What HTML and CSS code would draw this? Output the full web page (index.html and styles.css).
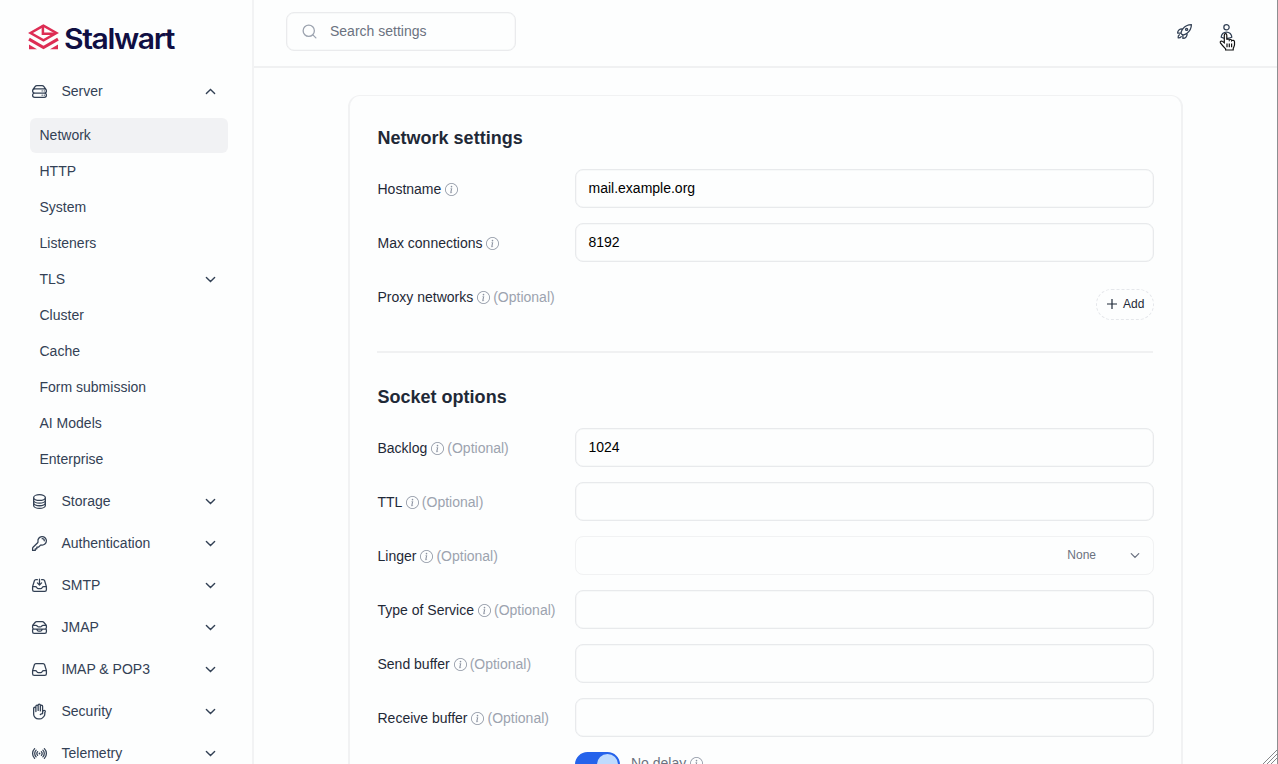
FILE: index.html
```html
<!DOCTYPE html>
<html lang="en">
<head>
<meta charset="utf-8">
<title>Stalwart - Network settings</title>
<link rel="stylesheet" href="styles.css">
</head>
<body>
<svg class="sprite" aria-hidden="true">
  <symbol id="down" viewBox="0 0 16 16"><path d="M2 5l6 6 6-6"/></symbol>
  <symbol id="info" viewBox="0 0 16 16"><path d="M8 15A7 7 0 1 1 8 1a7 7 0 0 1 0 14zm0 1A8 8 0 1 0 8 0a8 8 0 0 0 0 16z"/><path d="m8.93 6.588-2.29.287-.082.38.45.083c.294.07.352.176.288.469l-.738 3.468c-.194.897.105 1.319.808 1.319.545 0 1.178-.252 1.465-.598l.088-.416c-.2.176-.492.246-.686.246-.275 0-.375-.193-.304-.533L8.93 6.588zM9 4.5a1 1 0 1 1-2 0 1 1 0 0 1 2 0z"/></symbol>
</svg>
<div class="app">
  <aside class="sidebar">
    <svg class="logo" width="150" height="34" viewBox="0 0 150 34">
      <g fill="none" stroke="#dd2d54" stroke-width="2.5">
        <path d="M14.500 4.700 1.600 12l12.900 7.300L27.400 12z"/>
        <path d="M13.900 4.500v8.200h12"/>
        <path d="M0 18.100l14.500 8.400L29 18.100" stroke-width="3.100"/>
      </g>
      <path d="M0 23.400v4.800h8zM29 23.400v4.800h-8z" fill="#dd2d54"/>
      <text x="35" y="28" textLength="110" lengthAdjust="spacingAndGlyphs" class="wordmark">Stalwart</text>
    </svg>
    <nav class="nav">
      <a class="group first"><svg class="ico" viewBox="0 0 24 24"><path d="M5.250 14.250h13.500m-13.500 0a3 3 0 0 1-3-3m3 3a3 3 0 1 0 0 6h13.500a3 3 0 1 0 0-6m-16.500-3a3 3 0 0 1 3-3h13.500a3 3 0 0 1 3 3m-19.500 0a4.500 4.500 0 0 1 .9-2.700L5.737 5.100a3.375 3.375 0 0 1 2.700-1.350h7.126c1.062 0 2.062.5 2.700 1.350l2.587 3.450a4.500 4.500 0 0 1 .9 2.700m0 0a3 3 0 0 1-3 3m0 3h.008v.008h-.008v-.008Zm0-6h.008v.008h-.008v-.008Zm-3 6h.008v.008h-.008v-.008Zm0-6h.008v.008h-.008v-.008Z"/></svg>Server<svg class="chev up"><use href="#down"/></svg></a>
      <div class="sub">
        <a class="active">Network</a><a>HTTP</a><a>System</a><a>Listeners</a>
        <a>TLS<svg class="chev"><use href="#down"/></svg></a>
        <a>Cluster</a><a>Cache</a><a>Form submission</a><a>AI Models</a><a>Enterprise</a>
      </div>
      <a class="group"><svg class="ico" viewBox="0 0 24 24"><path d="M20.250 6.375c0 2.278-3.694 4.125-8.250 4.125S3.750 8.653 3.750 6.375m16.500 0c0-2.278-3.694-4.125-8.250-4.125S3.750 4.097 3.750 6.375m16.500 0v11.250c0 2.278-3.694 4.125-8.250 4.125s-8.250-1.847-8.250-4.125V6.375m16.500 0v3.750m-16.500-3.750v3.750m16.500 0v3.750C20.250 16.153 16.556 18 12 18s-8.250-1.847-8.250-4.125v-3.750m16.500 0c0 2.278-3.694 4.125-8.250 4.125s-8.250-1.847-8.250-4.125"/></svg>Storage<svg class="chev"><use href="#down"/></svg></a>
      <a class="group"><svg class="ico" viewBox="0 0 24 24"><path d="M15.750 5.250a3 3 0 0 1 3 3m3 0a6 6 0 0 1-7.029 5.912c-.563-.097-1.159.026-1.563.43L10.500 17.250H8.250v2.250H6v2.250H2.250v-2.818c0-.597.237-1.170.659-1.591l6.499-6.499c.404-.404.527-1 .43-1.563A6 6 0 1 1 21.750 8.250Z"/></svg>Authentication<svg class="chev"><use href="#down"/></svg></a>
      <a class="group"><svg class="ico" viewBox="0 0 24 24"><path d="M9 3.750H6.912a2.250 2.250 0 0 0-2.150 1.588L2.350 13.177a2.250 2.250 0 0 0-.1.661V18a2.250 2.250 0 0 0 2.250 2.250h15A2.250 2.250 0 0 0 21.750 18v-4.162c0-.224-.034-.447-.1-.661L19.240 5.338a2.250 2.250 0 0 0-2.150-1.588H15M2.250 13.500h3.860a2.250 2.250 0 0 1 2.012 1.244l.256.512a2.250 2.250 0 0 0 2.013 1.244h3.218a2.250 2.250 0 0 0 2.013-1.244l.256-.512a2.250 2.250 0 0 1 2.013-1.244h3.859M12 3v8.250m0 0-3-3m3 3 3-3"/></svg>SMTP<svg class="chev"><use href="#down"/></svg></a>
      <a class="group"><svg class="ico" viewBox="0 0 24 24"><path d="m7.875 14.250 1.214 1.942a2.250 2.250 0 0 0 1.908 1.058h2.006c.776 0 1.497-.4 1.908-1.058l1.214-1.942M2.410 9h4.636a2.250 2.250 0 0 1 1.872 1.002l.164.246a2.250 2.250 0 0 0 1.872 1.002h2.092a2.250 2.250 0 0 0 1.872-1.002l.164-.246A2.250 2.250 0 0 1 16.954 9h4.636M2.410 9a2.250 2.250 0 0 0-.16.832V12a2.250 2.250 0 0 0 2.250 2.250h15A2.250 2.250 0 0 0 21.750 12V9.832c0-.287-.055-.57-.16-.832M2.410 9a2.250 2.250 0 0 1 .382-.632l3.285-3.832a2.250 2.250 0 0 1 1.708-.786h8.430c.657 0 1.281.287 1.709.786l3.284 3.832c.163.190.291.404.382.632M4.500 20.250h15A2.250 2.250 0 0 0 21.750 18v-2.625c0-.621-.504-1.125-1.125-1.125H3.375c-.621 0-1.125.504-1.125 1.125V18a2.250 2.250 0 0 0 2.250 2.250Z"/></svg>JMAP<svg class="chev"><use href="#down"/></svg></a>
      <a class="group"><svg class="ico" viewBox="0 0 24 24"><path d="M2.250 13.500h3.860a2.250 2.250 0 0 1 2.012 1.244l.256.512a2.250 2.250 0 0 0 2.013 1.244h3.218a2.250 2.250 0 0 0 2.013-1.244l.256-.512a2.250 2.250 0 0 1 2.013-1.244h3.859m-19.500.338V18a2.250 2.250 0 0 0 2.250 2.250h15A2.250 2.250 0 0 0 21.750 18v-4.162c0-.224-.034-.447-.1-.661L19.240 5.338a2.250 2.250 0 0 0-2.150-1.588H6.911a2.250 2.250 0 0 0-2.150 1.588L2.350 13.177a2.250 2.250 0 0 0-.1.661Z"/></svg>IMAP &amp; POP3<svg class="chev"><use href="#down"/></svg></a>
      <a class="group"><svg class="ico" viewBox="0 0 24 24"><path d="M10.050 4.575a1.575 1.575 0 1 0-3.150 0v3m3.150-3v-1.500a1.575 1.575 0 0 1 3.150 0v1.500m-3.150 0 .075 5.925m3.075.75V4.575m0 0a1.575 1.575 0 0 1 3.150 0V15M6.900 7.575a1.575 1.575 0 1 0-3.150 0v8.175a6.750 6.750 0 0 0 6.750 6.750h2.018a5.250 5.250 0 0 0 3.712-1.538l1.732-1.732a5.250 5.250 0 0 0 1.538-3.712l.003-2.024a.668.668 0 0 1 .198-.471 1.575 1.575 0 1 0-2.228-2.228 3.818 3.818 0 0 0-1.120 2.687M6.900 7.575V12m6.270 4.318A4.490 4.490 0 0 1 16.350 15m.002 0h-.002"/></svg>Security<svg class="chev"><use href="#down"/></svg></a>
      <a class="group"><svg class="ico" viewBox="0 0 24 24"><path d="M9.348 14.652a3.750 3.750 0 0 1 0-5.304m5.304 0a3.750 3.750 0 0 1 0 5.304m-7.425 2.121a6.750 6.750 0 0 1 0-9.546m9.546 0a6.750 6.750 0 0 1 0 9.546M5.106 18.894c-3.808-3.807-3.808-9.980 0-13.788m13.788 0c3.808 3.807 3.808 9.980 0 13.788M12 12h.008v.008H12V12Zm.375 0a.375.375 0 1 1-.75 0 .375.375 0 0 1 .75 0Z"/></svg>Telemetry<svg class="chev"><use href="#down"/></svg></a>
    </nav>
  </aside>
  <div class="page">
    <header class="topbar">
      <div class="search">
        <svg width="15" height="15" viewBox="0 0 16 16"><circle cx="7.200" cy="7.200" r="6"/><path d="M11.600 11.600l3.200 3.200"/></svg>
        <span>Search settings</span>
      </div>
      <div class="actions">
        <svg class="action" viewBox="0 0 24 24"><path d="M15.590 14.370a6 6 0 0 1-5.840 7.380v-4.800m5.840-2.580a14.980 14.980 0 0 0 6.160-12.120A14.980 14.980 0 0 0 9.631 8.410m5.960 5.960a14.926 14.926 0 0 1-5.841 2.580m-.119-8.540a6 6 0 0 0-7.381 5.840h4.800m2.581-5.840a14.927 14.927 0 0 0-2.580 5.840m2.699 2.700c-.103.021-.207.041-.311.06a15.090 15.090 0 0 1-2.448-2.448 14.900 14.900 0 0 1 .06-.312m-2.240 2.390a4.493 4.493 0 0 0-1.757 4.306 4.493 4.493 0 0 0 4.306-1.758M16.500 9a1.500 1.500 0 1 1-3 0 1.500 1.500 0 0 1 3 0Z"/></svg>
        <svg class="action" viewBox="0 0 24 24"><path d="M15.750 6a3.750 3.750 0 1 1-7.500 0 3.750 3.750 0 0 1 7.500 0ZM4.501 20.118a7.500 7.500 0 0 1 14.998 0A17.933 17.933 0 0 1 12 21.750c-2.676 0-5.216-.584-7.499-1.632Z"/></svg>
      </div>
    </header>
    <main class="card">
      <section class="section">
        <h2>Network settings</h2>
        <div class="row"><label>Hostname <svg class="info"><use href="#info"/></svg></label><div class="field">mail.example.org</div></div>
        <div class="row"><label>Max connections <svg class="info"><use href="#info"/></svg></label><div class="field">8192</div></div>
        <div class="row"><label>Proxy networks <svg class="info"><use href="#info"/></svg> <i>(Optional)</i></label><div class="add"><svg width="10" height="10" viewBox="0 0 10 10"><path d="M5 0v10M0 5h10"/></svg>Add</div></div>
      </section>
      <section class="section">
        <h2>Socket options</h2>
        <div class="row"><label>Backlog <svg class="info"><use href="#info"/></svg> <i>(Optional)</i></label><div class="field">1024</div></div>
        <div class="row"><label>TTL <svg class="info"><use href="#info"/></svg> <i>(Optional)</i></label><div class="field"></div></div>
        <div class="row"><label>Linger <svg class="info"><use href="#info"/></svg> <i>(Optional)</i></label><div class="field unit"><span>None</span><svg class="chev"><use href="#down"/></svg></div></div>
        <div class="row"><label>Type of Service <svg class="info"><use href="#info"/></svg> <i>(Optional)</i></label><div class="field"></div></div>
        <div class="row"><label>Send buffer <svg class="info"><use href="#info"/></svg> <i>(Optional)</i></label><div class="field"></div></div>
        <div class="row"><label>Receive buffer <svg class="info"><use href="#info"/></svg> <i>(Optional)</i></label><div class="field"></div></div>
        <div class="row"><label></label><div class="switch"><span class="toggle"></span><span class="caption">No delay <svg class="info"><use href="#info"/></svg></span></div></div>
      </section>
    </main>
  </div>
  <svg class="pointer" width="18" height="20" viewBox="0 0 18 20"><path d="M5.300 10.800V3.200c0-2 2.500-2 2.500 0v4.600c.3-1.200 2.300-1 2.500.3.500-1 2.300-.7 2.400.6.700-.8 2.800-.4 2.800 1.100v3c0 1.600-1.300 2.700-1.300 4.200v1H6.600v-1.200C5.300 15.500 3.300 13.500 1.400 10.900c-.7-1.300 1-2.400 2.100-1.500z"/><path d="M8 11.500v3.700M10.300 11.500v3.700M12.600 11.500v3.700"/></svg>
  <svg class="grip" width="14" height="14" viewBox="0 0 14 14"><path d="M0 14 14 0M4 14 14 4M8 14l6-6"/></svg>
</div>
</body>
</html>
```
FILE: styles.css
```css
* { box-sizing: border-box; }
body {
  margin: 0;
  background: #fdfefe;
  color: #1f2937;
  font: 14px/18px "Liberation Sans", Arial, sans-serif;
}
.sprite { display: none; }
.app {
  position: relative;
  display: flex;
  height: 764px;
  overflow: hidden;
  border-right: 1px solid #8d8f91;
}

/* Sidebar */
.sidebar {
  flex: none;
  width: 254px;
  padding: 21px 24px 0 29px;
  border-right: 2px solid #f2f3f4;
}
.logo { display: block; overflow: visible; }
.wordmark {
  font: 600 28px Inter, sans-serif;
  letter-spacing: -1.3px;
  fill: #100f43;
}
.nav {
  display: flex;
  flex-direction: column;
  gap: 7px;
  margin: 19px 0 0 1px;
  color: #334155;
}
.group, .sub a {
  display: flex;
  flex: none;
  align-items: center;
  height: 35px;
  padding-bottom: 1px;
}
.group { padding-right: 12px; }
.group .ico { margin: 1px 13.5px 0 1px; }
.ico, .action {
  width: 17px;
  height: 17px;
  fill: none;
  stroke: currentColor;
  stroke-width: 1.8;
  stroke-linecap: round;
  stroke-linejoin: round;
}
.sub {
  display: flex;
  flex-direction: column;
  gap: 1px;
  margin-top: 2px;
}
.sub a {
  padding-left: 9.5px;
  padding-right: 12px;
  border-radius: 6px;
}
.sub .active { background: #f1f2f4; }
.chev {
  width: 11px;
  height: 11px;
  margin: 1px 0 0 auto;
  fill: none;
  stroke: currentColor;
  stroke-width: 2;
  stroke-linecap: round;
}
.up { transform: rotate(180deg); }

/* Top bar */
.page { flex: 1; min-width: 0; }
.topbar {
  display: flex;
  justify-content: space-between;
  height: 68px;
  padding: 12px 42px 0 31.5px;
  border-bottom: 2px solid #f0f1f2;
}
.search {
  display: flex;
  gap: 13px;
  width: 230px;
  height: 39px;
  padding: 9px 15.5px;
  border: 1px solid #eaebed;
  box-shadow: inset 0 0 0 .5px #f2f3f4;
  border-radius: 8px;
  color: #6b7280;
}
.search svg { margin-top: 2px; fill: none; stroke: #9ca3af; stroke-width: 1.4; stroke-linecap: round; }
.actions { display: flex; gap: 25px; padding-top: 11px; color: #334155; }

/* Settings card */
.card {
  width: 835px;
  height: 760px;
  margin: 27px 0 0 94px;
  padding: 0 28px 0 27px;
  border: 1px solid #f1f2f3;
  border-width: 1px 2px;
  border-radius: 12px;
}
.section { padding-top: 30px; }
.section + .section {
  margin-top: 31px;
  border-top: 2px solid #f0f1f2;
  padding-top: 32px;
}
h2 {
  margin: 0 0 19px;
  font-size: 18px;
  line-height: 24px;
  font-weight: 700;
  text-indent: .4px;
  letter-spacing: .02px;
}
.row {
  display: flex;
  align-items: flex-start;
  margin-bottom: 15px;
}
label {
  flex: none;
  width: 198px;
  padding: 11px 0 0 .5px;
  white-space: nowrap;
}
.section + .section label { padding-top: 10.5px; }
.row i { margin-left: -.8px; font-style: normal; color: #9ca3af; }
.info {
  width: 13px;
  height: 13px;
  fill: #8b93a1;
  vertical-align: -2px;
}
.field {
  flex: 1;
  height: 39px;
  padding: 9px 12.5px;
  margin-right: -1px;
  border: 1px solid #e8eaec;
  border-radius: 8px;
  box-shadow: inset 0 0 0 .5px #f2f3f4;
  color: #000;
}
.unit {
  display: flex;
  padding: 9px 13px;
  border-color: #f1f2f3;
  box-shadow: none;
  color: #6b7280;
  font-size: 12px;
}
.unit span { margin-left: auto; }
.unit .chev { width: 10px; margin: 4px 0 0 34px; }
.add {
  display: flex;
  align-items: center;
  gap: 6px;
  width: 58px;
  height: 31px;
  margin: 12px -1px 0 auto;
  padding: 0 8px 1px 10px;
  border: 1px dashed #e5e7eb;
  border-radius: 16px;
  font-size: 12px;
}
.row:has(.add) { margin-bottom: 0; }
.add path { stroke: #1f2937; stroke-width: 1.2; }
.switch { display: flex; gap: 11px; }
.toggle {
  width: 45px;
  height: 25px;
  padding: 2px;
  border-radius: 13px;
  background: #2563eb;
}
.toggle::after {
  content: "";
  display: block;
  width: 21px;
  height: 21px;
  margin-left: 20px;
  border-radius: 50%;
  background: #bfdbfe;
}
.caption { padding-top: 2px; color: #6b7280; }

/* Pointer and resize grip float over the page */
.pointer {
  position: absolute;
  left: 1219px;
  top: 32px;
  fill: #fff;
  stroke: #111;
  stroke-width: 1.200;
}
.grip {
  position: absolute;
  right: 0;
  bottom: 0;
  stroke: #85878a;
}
```
